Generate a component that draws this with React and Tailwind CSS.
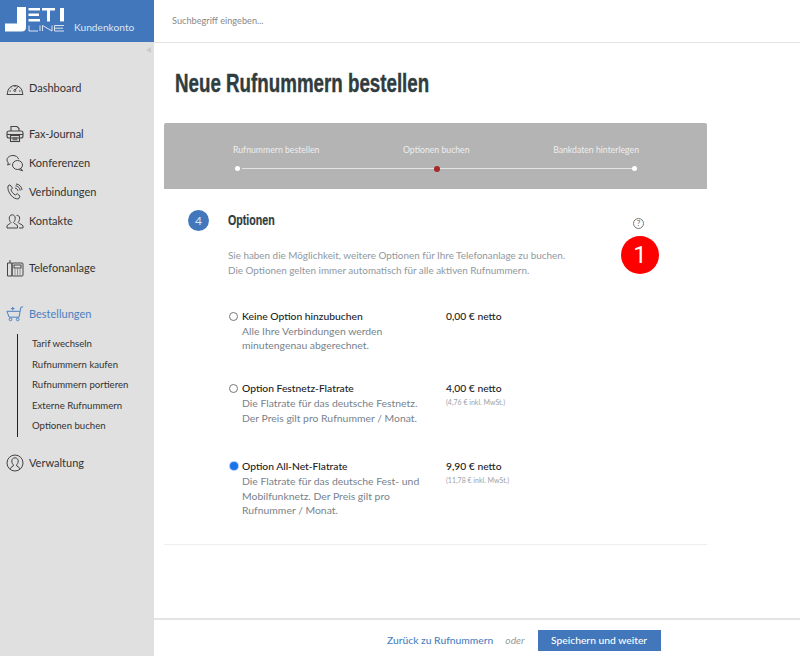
const navIcon = "w-[18px] h-[18px] shrink-0 text-[#444] fill-none stroke-current";

function Logo() {
    return (
        <svg width="60" height="25" viewBox="0 0 60 25" className="shrink-0">
            <path d="M12 0 H21 V20 Q21 24.5 16.5 24.5 H0 V16.5 H12 Z" fill="#fff" />
            <path d="M23.5 1 H35 V3.4 H23.5 Z M23.5 6.5 H34 V8.9 H23.5 Z M23.5 12 H35 V14.4 H23.5 Z" fill="#fff" />
            <path d="M37 1 H50 V3.4 H45 V14.4 H42 V3.4 H37 Z" fill="#fff" />
            <path d="M55 1 H59 V14.4 H55 Z" fill="#fff" />
            <g stroke="#fff" strokeWidth="0.8" fill="none">
                <path d="M24 18.5 V24 H33" />
                <path d="M35 18.5 V24" />
                <path d="M37.5 24 V18.5 L47 24 V18.5" />
                <path d="M59 18.5 H49.5 V24 H59 M49.5 21.2 H58" />
            </g>
        </svg>
    );
}

function Dashboard() {
    return (
        <svg viewBox="0 0 18 18" className={navIcon} strokeWidth="1">
            <path d="M1.5 14 A7.5 7.5 0 0 1 16.5 14 L17 15.5 H1 Z" />
            <path d="M9 11 L12.5 7 M3.5 12 H5 M13 12 H14.5 M5 8.5 L6 9.5 M9 6.5 V8" />
            <circle cx="8.8" cy="11.5" r="1" />
        </svg>
    );
}

function Fax() {
    return (
        <svg viewBox="0 0 18 18" className={navIcon} strokeWidth="1.1">
            <path d="M5 6 V1.5 H11 L13 3.5 V6" />
            <rect x="1" y="6" width="16" height="7" rx="2" />
            <path d="M1 9.5 H17" />
            <rect x="4.5" y="10.5" width="9" height="6" />
            <path d="M6.5 13 H11.5 M6.5 14.8 H11.5" />
        </svg>
    );
}

function Konferenz() {
    return (
        <svg viewBox="0 0 18 18" className={navIcon} strokeWidth="1">
            <path d="M7 1.5 C3.5 1.5 1 3.5 1 6 C1 7.2 1.6 8.2 2.4 9 L1.5 11 L4.5 10" />
            <path d="M7 1.5 C9.8 1.5 12 3 12.6 5.2" />
            <ellipse cx="11.5" cy="11" rx="5" ry="4.5" />
            <path d="M15 14.5 L16.5 16.8 L13 15.5" />
        </svg>
    );
}

function Phone() {
    return (
        <svg viewBox="0 0 18 18" className={navIcon} strokeWidth="1">
            <path d="M2 3 L4 1.8 L6.5 5 L5 6.8 C5.5 8.8 7.3 11 9.5 12 L11.2 10.6 L14 13.2 L12.6 15.8 C7.5 17 0.8 9 2 3 Z" />
            <path d="M9 5 C10.5 5.2 11.8 6.4 12 8 M9.5 2.8 C12 3 14 5 14.2 7.6 M10 1 C13.2 1.2 15.8 3.6 16 7" />
        </svg>
    );
}

function People() {
    return (
        <svg viewBox="0 0 18 18" className={navIcon} strokeWidth="1">
            <path d="M1 16 V14 C1 12.5 4.5 12 5 10.5 C3.8 9.5 3.3 8 3.3 6.2 C3.3 4 4.6 2.8 6.2 2.8 C7.8 2.8 9.2 4 9.2 6.2 C9.2 8 8.6 9.5 7.4 10.5 C8 12 11.5 12.5 11.5 14 V16 Z" />
            <path d="M10.5 3.4 C12.3 3 13.6 4.2 13.6 6.2 C13.6 8 13 9.5 12.1 10.4 C12.6 12 17 12.4 17 14 V16 H13" />
        </svg>
    );
}

function Anlage() {
    return (
        <svg viewBox="0 0 18 18" className={navIcon} strokeWidth="1">
            <path d="M4 1 V4 H1.5 V17 H6 V4 H4" />
            <rect x="6" y="4" width="11" height="13" rx="1" />
            <rect x="8" y="6" width="7" height="3" />
            <path d="M8.5 11 H9.5 M11 11 H12 M13.5 11 H14.5 M8.5 13 H9.5 M11 13 H12 M13.5 13 H14.5 M8.5 15 H9.5 M11 15 H12 M13.5 15 H14.5" />
        </svg>
    );
}

function Cart() {
    return (
        <svg viewBox="0 0 20 18" className="w-[18px] h-[18px] shrink-0 text-[#4a7fc1] fill-none stroke-current" strokeWidth="1.1">
            <path d="M19 1 L16.5 1.5 L14.5 12.5 H3.5 L1 6 H15.5" />
            <circle cx="5" cy="15" r="1.5" />
            <circle cx="13" cy="15" r="1.5" />
            <path d="M7.5 1 V5 M5.5 3 H9.5" />
        </svg>
    );
}

function User() {
    return (
        <svg viewBox="0 0 18 18" className={navIcon} strokeWidth="1">
            <circle cx="9" cy="9" r="8" />
            <path d="M4 15 C4.5 12.8 7.5 12.8 7.6 11 C6.3 10 5.8 8.6 5.8 7 C5.8 5 7.2 3.8 9 3.8 C10.8 3.8 12.2 5 12.2 7 C12.2 8.6 11.7 10 10.4 11 C10.5 12.8 13.5 12.8 14 15" />
        </svg>
    );
}

function NavItem({icon, label, active, className = ""}) {
    return (
        <div className={`flex items-center gap-[4px] h-[20px] pl-[5px] ${className}`}>
            <span className="w-[20px] flex justify-center">{icon}</span>
            <span className={`text-[11px] leading-[20px] ${active ? "text-[#4a7fc1]" : "text-[#333]"}`}>{label}</span>
        </div>
    );
}

function Option({checked, title, lines, price, incl, className = ""}) {
    return (
        <div className={`flex ${className}`}>
            <div className="w-[218px] flex">
                <span className={`rounded-full shrink-0 ${checked ? "ml-[1.5px] mr-[0.5px] mt-[3px] w-[8px] h-[8px] bg-[#1a73e8] ring-1 ring-[#a9c9f5]" : "ml-[1px] mt-[3px] w-[9px] h-[9px] border border-[#767676] bg-white"}`}></span>
                <div className="ml-[4px]">
                    <div className="text-[10.3px] leading-[14.7px] text-[#222] font-medium">{title}</div>
                    {lines.map((l) => (
                        <div key={l} className="text-[10.4px] leading-[14.7px] text-[#77828c]">{l}</div>
                    ))}
                </div>
            </div>
            <div>
                <div className="text-[10.3px] leading-[14.7px] text-[#222] font-medium">{price}</div>
                {incl && <div className="text-[7px] leading-[11px] mt-[1px] text-[#9aa3ab]">{incl}</div>}
            </div>
        </div>
    );
}

export default function App() {
    return (
        <div className="flex w-[800px] h-[656px] overflow-hidden bg-white font-['Lato','Liberation_Sans',sans-serif]">
            <aside className="w-[154px] shrink-0 bg-[#e0e0e0] flex flex-col">
                <div className="h-[42px] bg-[#4377bb] flex items-start pl-[5px] pt-[7px] gap-[9px]">
                    <Logo />
                    <span className="text-[10.2px] leading-[14px] text-[#dbe6f4] mt-[13px]">Kundenkonto</span>
                </div>
                <div className="h-[14px] flex justify-end pr-[3px] pt-[5px]">
                    <span className="w-0 h-0 border-y-[3px] border-y-transparent border-r-[5px] border-r-[#cacaca]"></span>
                </div>
                <NavItem className="mt-[22px]" icon={<Dashboard />} label="Dashboard" />
                <NavItem className="mt-[26px]" icon={<Fax />} label="Fax-Journal" />
                <NavItem className="mt-[9px]" icon={<Konferenz />} label="Konferenzen" />
                <NavItem className="mt-[9px]" icon={<Phone />} label="Verbindungen" />
                <NavItem className="mt-[9px]" icon={<People />} label="Kontakte" />
                <NavItem className="mt-[27px]" icon={<Anlage />} label="Telefonanlage" />
                <NavItem className="mt-[26px]" icon={<Cart />} label="Bestellungen" active />
                <div className="ml-[17px] mt-[10px] border-l border-[#222] pl-[14px] h-[103px] flex flex-col justify-between text-[9.6px] leading-[20.6px] text-[#333]">
                    <div>Tarif wechseln</div>
                    <div>Rufnummern kaufen</div>
                    <div>Rufnummern portieren</div>
                    <div>Externe Rufnummern</div>
                    <div>Optionen buchen</div>
                </div>
                <NavItem className="mt-[16px]" icon={<User />} label="Verwaltung" />
            </aside>
            <div className="flex-1 flex flex-col min-w-0">
                <div className="h-[43px] shrink-0 border-b border-[#e3e3e3] pl-[18px] flex items-center text-[9.2px] text-[#8a8a8a]">Suchbegriff eingeben...</div>
                <h1 className="ml-[21px] mt-[25px] w-max origin-left scale-x-[0.75] text-[25px] leading-[30px] font-bold text-[#2f3c40] [-webkit-text-stroke:0.4px_#2f3c40] font-['Liberation_Sans',sans-serif]">Neue Rufnummern bestellen</h1>
                <div className="ml-[10px] mt-[25px] w-[543px] h-[66px] bg-[#b4b4b4] rounded-t-[2px] shrink-0 pl-[69px] pr-[68px] pt-[20px]">
                    <div className="flex justify-between text-[8.7px] leading-[13px] text-[#eeeeee]">
                        <span>Rufnummern bestellen</span>
                        <span>Optionen buchen</span>
                        <span>Bankdaten hinterlegen</span>
                    </div>
                    <div className="flex items-center mt-[10px] h-[5px] pl-[2px] pr-[2px]">
                        <span className="w-[5px] h-[5px] rounded-full bg-white shrink-0"></span>
                        <span className="flex-1 h-[1px] bg-[#e4e4e4] ml-[2px]"></span>
                        <span className="w-[6px] h-[6px] rounded-full bg-[#a52a2a] shrink-0"></span>
                        <span className="flex-1 h-[1px] bg-[#e4e4e4]"></span>
                        <span className="w-[5px] h-[5px] rounded-full bg-white shrink-0"></span>
                    </div>
                </div>
                <div className="ml-[10px] w-[543px] h-[356px] border-b border-[#eeeeee] relative shrink-0 pl-[24px] pt-[21px]">
                    <div className="flex items-center">
                        <span className="w-[21px] h-[21px] rounded-full bg-[#4377bb] text-[#dbe6f4] text-[12px] flex items-center justify-center">4</span>
                        <span className="ml-[19px] w-max origin-left scale-x-[0.76] text-[14px] font-bold text-[#2f3c40] [-webkit-text-stroke:0.2px_#2f3c40] font-['Liberation_Sans',sans-serif]">Optionen</span>
                    </div>
                    <div className="ml-[40px] mt-[17px] text-[9.9px] leading-[15px] text-[#8f98a0]">
                        <div>Sie haben die Möglichkeit, weitere Optionen für Ihre Telefonanlage zu buchen.</div>
                        <div>Die Optionen gelten immer automatisch für alle aktiven Rufnummern.</div>
                    </div>
                    <div className="ml-[40px] mt-[31px]">
                        <Option title="Keine Option hinzubuchen" lines={["Alle Ihre Verbindungen werden", "minutengenau abgerechnet."]} price="0,00 € netto" />
                        <Option className="mt-[28px]" title="Option Festnetz-Flatrate" lines={["Die Flatrate für das deutsche Festnetz.", "Der Preis gilt pro Rufnummer / Monat."]} price="4,00 € netto" incl="(4,76 € inkl. MwSt.)" />
                        <Option checked className="mt-[34px]" title="Option All-Net-Flatrate" lines={["Die Flatrate für das deutsche Fest- und", "Mobilfunknetz. Der Preis gilt pro", "Rufnummer / Monat."]} price="9,90 € netto" incl="(11,78 € inkl. MwSt.)" />
                    </div>
                    <span className="absolute left-[469px] top-[29px] w-[11px] h-[11px] rounded-full border border-[#777] text-[#666] text-[8px] leading-[9px] flex items-center justify-center">?</span>
                    <span className="absolute left-[457px] top-[47px] w-[38px] h-[38px] rounded-full bg-[#fe0000] text-white text-[24px] leading-none font-['Roboto',sans-serif] flex items-center justify-center">1</span>
                </div>
                <div className="mt-auto h-[38px] shrink-0 border-t-2 border-[#e4e4e4] flex items-center pl-[233px] pt-[5px]">
                    <span className="text-[10.3px] text-[#4a7fc1] font-medium">Zurück zu Rufnummern</span>
                    <span className="ml-[12px] text-[10.3px] italic text-[#999]">oder</span>
                    <span className="ml-[13px] w-[123px] h-[21px] bg-[#4377bb] text-white text-[10.3px] flex items-center justify-center font-medium">Speichern und weiter</span>
                </div>
            </div>
        </div>
    );
}
